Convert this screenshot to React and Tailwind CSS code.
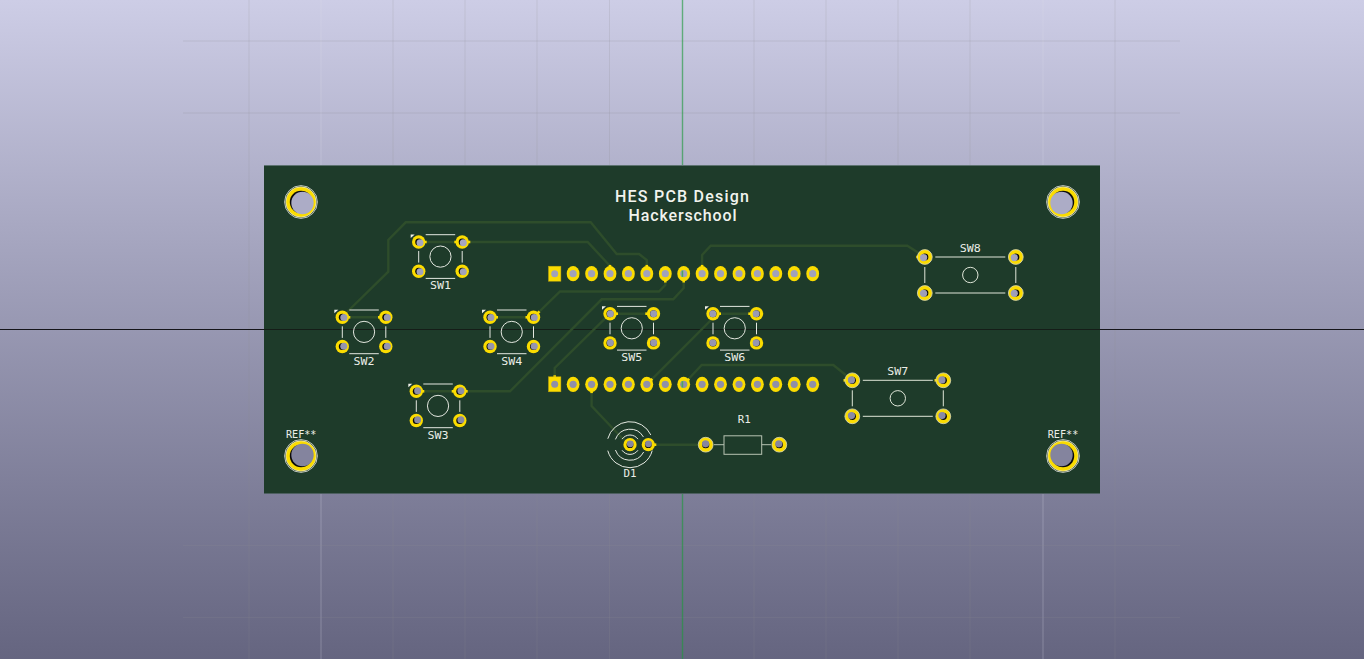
import React from "react";

const pinXs = [554.7, 573.1, 591.6, 610, 628.4, 646.8, 665.3, 683.7, 702.1, 720.5, 739, 757.4, 775.8, 794.2, 812.7];
const YELLOW = "#fbdc00";

function holeColor(y) {
  const t = y / 659;
  const v = Math.round(204 - 104 * t);
  return `rgb(${v},${v},${v + 26})`;
}

const verticals = [249, 393, 465, 537, 609.5, 754, 826, 898, 970, 1115];
const majors = [321, 1043];
const horizontals = [41, 113, 545.5, 617.5];

const tracks = [
  "M345 314L388.3 271.7V240L405.7 222.3H590.7L616.7 254H639L646.8 260V273.7",
  "M418.7 242H587.7L610 266V273.7",
  "M342.3 317.3H386",
  "M490 317.3H533.5L560 291.5H659L665.3 285V273.7",
  "M416.3 391.3H510L601.7 299.3H673.3L683.7 288V273.7",
  "M554.7 384.3V368L610 313.7H653.3",
  "M646.8 384.3L713 318V313.7H756.3",
  "M702.1 273.7V255L710.7 245.7H907.3L925 257",
  "M683.7 384.3L701.7 365H833.3L852.3 380.3",
  "M591.6 384.3V406L620 436L630 444.7",
  "M648.3 444.7H705.7",
];

const nubs = [
  [418.7, 242, 8, 0], [462.3, 242, -8, 0], [462.3, 242, 8, 0],
  [342.3, 317.3, 8, 0], [386, 317.3, -8, 0],
  [490, 317.3, 8, 0], [533.5, 317.3, -8, 0], [533.5, 317.3, 6, -6],
  [416.3, 391.3, 8, 0], [459.7, 391.3, -8, 0], [459.7, 391.3, 8, 0],
  [610, 313.7, 8, 0], [653.3, 313.7, -8, 0], [713, 313.7, 8, 0], [756.3, 313.7, -8, 0],
  [610, 273.7, 0, -8.8], [646.8, 273.7, 0, -8.8], [665.3, 273.7, 0, 8.8], [683.7, 273.7, 0, 8.8], [702.1, 273.7, 0, -8.8],
  [554.7, 384.3, 0, -9], [591.6, 384.3, 0, 8.8], [646.8, 384.3, 5.5, -5.5], [683.7, 384.3, 5.5, -5.5],
  [925, 257, -8.8, 0], [852.3, 380.3, -8.8, 0], [943.3, 380.3, -8.8, 0], [648.3, 444.7, 8, 0],
];

function Hole({ x, y, r }) {
  const ox = Math.max(-1.5, Math.min(1.5, (682 - x) * 0.005));
  const oy = Math.max(-1.2, Math.min(1.2, (329.5 - y) * 0.008));
  return (
    <g>
      <circle cx={x} cy={y} r={r} fill="#0b0b0b" />
      <circle cx={x + ox} cy={y + oy} r={r} fill={holeColor(y)} />
    </g>
  );
}

function Pad({ x, y, r = 6.7, hole = 3.5, edge }) {
  return (
    <g>
      <circle cx={x} cy={y} r={r} fill={YELLOW} stroke={edge || "none"} strokeWidth={edge ? 0.8 : 0} />
      <Hole x={x} y={y} r={hole} />
    </g>
  );
}

function PinRow({ y }) {
  return (
    <g>
      {pinXs.map((x, i) =>
        i === 0 ? (
          <g key={x}>
            <rect x={x - 6.2} y={y - 7.5} width={12.4} height={15} fill={YELLOW} stroke="#c4a80c" strokeWidth="0.5" />
            <circle cx={x} cy={y} r={3.5} fill={holeColor(y)} />
          </g>
        ) : (
          <g key={x}>
            <ellipse cx={x} cy={y} rx={6.4} ry={7.6} fill={YELLOW} />
            <circle cx={x} cy={y} r={3.6} fill={holeColor(y)} />
            {x === 683.7 && <rect x={681.6} y={y - 3.2} width={1.6} height={6.4} fill="#4da55f" />}
          </g>
        )
      )}
    </g>
  );
}

function Mount({ x, y }) {
  return (
    <g>
      <circle cx={x} cy={y} r={16.4} fill="none" stroke="#e8e8e4" strokeWidth="0.8" />
      <circle cx={x} cy={y} r={15.2} fill={YELLOW} stroke="#f2f2e6" strokeWidth="0.6" />
      <Hole x={x} y={y} r={11.2} />
    </g>
  );
}

function Tact({ x, y, label }) {
  const w = 43.5;
  const h = 29.2;
  const cx = x + w / 2;
  const cy = y + h / 2;
  return (
    <g>
      <g stroke="#e4e8e0" strokeWidth="1" fill="none">
        <path d={`M${x + 7} ${y - 7.3}H${x + 36.5}`} />
        <path d={`M${x + 7} ${y + h + 7.2}H${x + 36.5}`} />
        <path d={`M${x} ${y + 9}V${y + 20.6}`} />
        <path d={`M${x + w} ${y + 9}V${y + 20.6}`} />
        <circle cx={cx} cy={cy} r={10.6} />
      </g>
      <polygon points={`${x - 8},${y - 7.5} ${x - 4},${y - 7.5} ${x - 8},${y - 4}`} fill="#f0f0ea" />
      <Pad x={x} y={y} />
      <Pad x={x + w} y={y} />
      <Pad x={x} y={y + h} />
      <Pad x={x + w} y={y + h} />
      <Label x={cx} y={y + h + 18} w={21}>{label}</Label>
    </g>
  );
}

function Wide({ x, y, label }) {
  const w = 91;
  const h = 36;
  const cx = x + w / 2;
  return (
    <g>
      <g stroke="#dfe6d8" strokeWidth="1" fill="none">
        <path d={`M${x + 10.5} ${y}H${x + 80.5}`} />
        <path d={`M${x + 10.5} ${y + h}H${x + 80.5}`} />
        <path d={`M${x} ${y + 10}V${y + 26}`} />
        <path d={`M${x + w} ${y + 10}V${y + 26}`} />
        <circle cx={cx} cy={y + 18} r={7.7} />
      </g>
      <Pad x={x} y={y} r={7.4} hole={3.6} edge="#d8d8b8" />
      <Pad x={x + w} y={y} r={7.4} hole={3.6} edge="#d8d8b8" />
      <Pad x={x} y={y + h} r={7.4} hole={3.6} edge="#d8d8b8" />
      <Pad x={x + w} y={y + h} r={7.4} hole={3.6} edge="#d8d8b8" />
      <Label x={cx} y={y - 5.3} w={21}>{label}</Label>
    </g>
  );
}

function Label({ x, y, w, children }) {
  return (
    <text
      x={x}
      y={y}
      textAnchor="middle"
      textLength={w}
      lengthAdjust="spacingAndGlyphs"
      fill="#eceee8"
      className="font-['DejaVu_Sans_Mono',monospace] text-[11px]"
    >
      {children}
    </text>
  );
}

function arc(r, a0, a1) {
  const p = (a) => [630 + r * Math.cos((a * Math.PI) / 180), 444.7 + r * Math.sin((a * Math.PI) / 180)];
  const [x0, y0] = p(a0);
  const [x1, y1] = p(a1);
  return `M${x0.toFixed(2)} ${y0.toFixed(2)}A${r} ${r} 0 ${Math.abs(a1 - a0) > 180 ? 1 : 0} 1 ${x1.toFixed(2)} ${y1.toFixed(2)}`;
}

export default function App() {
  return (
    <div className="relative flex h-[659px] w-full items-center justify-center overflow-hidden bg-gradient-to-b from-[#cdcde6] to-[#656580]">
      <svg className="absolute inset-0 h-full w-full" viewBox="0 0 1364 659" aria-hidden="true">
        {verticals.map((x) => (
          <path key={x} d={`M${x} 0V659`} stroke="#8a8a90" strokeOpacity="0.2" strokeWidth="1" />
        ))}
        {majors.map((x) => (
          <path key={x} d={`M${x} 0V659`} stroke="#dcdcec" strokeOpacity="0.22" strokeWidth="1.3" />
        ))}
        {horizontals.map((y) => (
          <path key={y} d={`M183 ${y}H1180`} stroke="#8a8a90" strokeOpacity="0.22" strokeWidth="1" />
        ))}
        <path d="M682.5 0V659" stroke="#1f9a3c" strokeOpacity="0.62" strokeWidth="1.4" />
        <path d="M0 329.5H1364" stroke="#15151a" strokeWidth="1" />
      </svg>

      <div className="relative h-[327px] w-[836px] bg-[#1e3b2a] shadow-[0_-1px_0_#5d7270,0_1px_0_#4d5f60]">
        <svg className="absolute inset-0 h-full w-full" viewBox="264 166 836 327">
          <path d="M264 329.5H1100" stroke="#141a16" strokeWidth="0.9" />
          <g fill="none" stroke="#2e4d2b" strokeWidth="2.4" strokeLinejoin="miter">
            {tracks.map((d) => (
              <path key={d} d={d} />
            ))}
          </g>
          <g stroke={YELLOW} strokeWidth="2.6">
            {nubs.map(([x, y, dx, dy]) => (
              <path key={`${x}-${y}-${dx}-${dy}`} d={`M${x} ${y}l${dx} ${dy}`} />
            ))}
          </g>

          <Mount x={301} y={202} />
          <Mount x={1063} y={202} />
          <Mount x={301} y={456} />
          <Mount x={1063} y={456} />

          <text
            x={682}
            y={202.3}
            textAnchor="middle"
            textLength={134}
            fill="#f1f3ee"
            className="font-['Roboto',sans-serif] text-[16px] font-medium"
          >
            HES PCB Design
          </text>
          <text
            x={682.5}
            y={221}
            textAnchor="middle"
            textLength={108}
            fill="#f1f3ee"
            className="font-['Roboto',sans-serif] text-[16px] font-medium"
          >
            Hackerschool
          </text>
          <Label x={301.2} y={437.7} w={30.5}>REF**</Label>
          <Label x={1063} y={437.7} w={30.5}>REF**</Label>

          <Tact x={418.7} y={242} label="SW1" />
          <Tact x={342.3} y={317.3} label="SW2" />
          <Tact x={416.3} y={391.3} label="SW3" />
          <Tact x={490} y={317.3} label="SW4" />
          <Tact x={610} y={313.7} label="SW5" />
          <Tact x={713} y={313.7} label="SW6" />

          <Wide x={852.3} y={380.3} label="SW7" />
          <Wide x={924.8} y={257} label="SW8" />

          <PinRow y={273.7} />
          <PinRow y={384.3} />

          <g fill="none" stroke="#e6eae2" strokeWidth="1">
            <path d={arc(23, 15, 165)} />
            <path d={arc(23, 195, 335)} />
            <path d={arc(15.5, 28, 160)} />
            <path d={arc(15.5, 200, 330)} />
            <path d={arc(9.7, 35, 145)} />
            <path d={arc(9.7, 215, 325)} />
          </g>
          <Pad x={630} y={444.7} r={6.6} hole={3.4} />
          <Pad x={648.3} y={444.7} r={6.6} hole={3.4} />
          <Label x={630} y={477} w={13}>D1</Label>

          <g fill="none" stroke="#b7c3b2" strokeWidth="1">
            <rect x={724} y={435.8} width={37.7} height={18.5} />
            <path d="M714 444.7H724M761.7 444.7H771" />
          </g>
          <Pad x={705.7} y={444.7} r={7.4} hole={3.6} edge="#d8d8b8" />
          <Pad x={779.3} y={444.7} r={7.4} hole={3.6} edge="#d8d8b8" />
          <Label x={744.3} y={423.3} w={13}>R1</Label>
        </svg>
      </div>
    </div>
  );
}
